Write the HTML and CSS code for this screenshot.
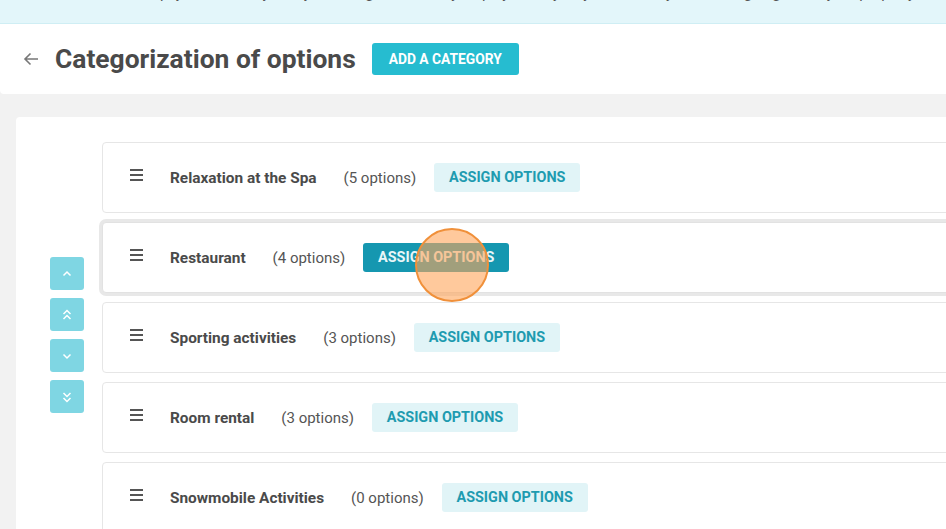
FILE: index.html
```html
<!DOCTYPE html>
<html lang="en">
<head>
  <meta charset="UTF-8" />
  <meta name="viewport" content="width=device-width, initial-scale=1.0"/>
  <title>Categorization of options</title>
  <link rel="stylesheet" href="styles.css">
</head>
<body>
  <!-- Bandeau d'info (coupé en haut) -->
  <div class="bandeau">
    <p class="bandeau-texte"><span class="bandeau-icone">❝</span> Tip: you can easily sort your categories so they display exactly as you wish on your booking engine for your property</p>
  </div>

  <!-- En-tête -->
  <div class="entete">
    <a class="retour" href="#">
      <svg width="16" height="16" viewBox="0 0 16 16"><path d="M15 8H2M7.5 2.5L2 8l5.5 5.5" fill="none" stroke="#777" stroke-width="1.6"/></svg>
    </a>
    <h1>Categorization of options</h1>
    <button class="btn-ajout">ADD A CATEGORY</button>
  </div>

  <div class="contenu">
    <div class="panneau">
      <div class="fleches">
        <button class="fleche"><svg width="12" height="12" viewBox="0 0 12 12"><path d="M2.5 7.5L6 4l3.5 3.5" fill="none" stroke="#fff" stroke-width="1.5"/></svg></button>
        <button class="fleche"><svg width="12" height="14" viewBox="0 0 12 14"><path d="M2.5 6L6 2.5 9.5 6M2.5 11L6 7.5l3.5 3.5" fill="none" stroke="#fff" stroke-width="1.5"/></svg></button>
        <button class="fleche"><svg width="12" height="12" viewBox="0 0 12 12"><path d="M2.5 4.5L6 8l3.5-3.5" fill="none" stroke="#fff" stroke-width="1.5"/></svg></button>
        <button class="fleche"><svg width="12" height="14" viewBox="0 0 12 14"><path d="M2.5 3L6 6.5 9.5 3M2.5 8L6 11.5 9.5 8" fill="none" stroke="#fff" stroke-width="1.5"/></svg></button>
      </div>

      <div class="liste">
        <div class="categorie">
          <span class="poignee"></span>
          <strong class="nom">Relaxation at the Spa</strong>
          <span class="nombre">(5 options)</span>
          <button class="btn-assigner">ASSIGN OPTIONS</button>
        </div>
        <div class="categorie active">
          <span class="poignee"></span>
          <strong class="nom">Restaurant</strong>
          <span class="nombre">(4 options)</span>
          <button class="btn-assigner">ASSIGN OPTIONS</button>
          <span class="clic"></span>
        </div>
        <div class="categorie">
          <span class="poignee"></span>
          <strong class="nom">Sporting activities</strong>
          <span class="nombre">(3 options)</span>
          <button class="btn-assigner">ASSIGN OPTIONS</button>
        </div>
        <div class="categorie">
          <span class="poignee"></span>
          <strong class="nom">Room rental</strong>
          <span class="nombre">(3 options)</span>
          <button class="btn-assigner">ASSIGN OPTIONS</button>
        </div>
        <div class="categorie">
          <span class="poignee"></span>
          <strong class="nom">Snowmobile Activities</strong>
          <span class="nombre">(0 options)</span>
          <button class="btn-assigner">ASSIGN OPTIONS</button>
        </div>
      </div>
    </div>
  </div>
</body>
</html>
```

FILE: styles.css
```css
html, body {
  margin: 0;
  height: 100%;
  overflow: hidden;
}
body {
  font-family: Roboto, "Liberation Sans", sans-serif;
  background: #f2f2f2;
  color: #4a4a4a;
}
button {
  font-family: inherit;
  border: none;
  cursor: pointer;
}

.bandeau {
  height: 23px;
  background: #e3f6fa;
  border-bottom: 1px solid #cfeef4;
  overflow: hidden;
}
.bandeau-texte {
  margin: -16px 0 0 130px;
  font-size: 15px;
  line-height: 18px;
  color: #555;
  white-space: nowrap;
}
.bandeau-icone {
  font-weight: bold;
  color: #333;
  margin-right: 6px;
}

.entete {
  height: 70px;
  background: #fff;
  display: flex;
  align-items: center;
  padding-left: 23px;
  border-bottom-left-radius: 4px;
}
.retour {
  display: flex;
  margin-right: 16px;
}
.entete h1 {
  margin: 0 16px 0 0;
  font-size: 26.4px;
  font-weight: bold;
  color: #4a4a4a;
}
.btn-ajout {
  height: 32px;
  padding: 0 17px;
  background: #26bcd0;
  color: #fff;
  font-size: 13.8px;
  font-weight: bold;
  border-radius: 3px;
}

.contenu {
  padding: 23px 0 0 16px;
}
.panneau {
  background: #fff;
  border-radius: 4px 0 0 0;
  padding: 25px 0 0 34px;
  display: flex;
  gap: 18px;
  height: 420px;
}
.fleches {
  display: flex;
  flex-direction: column;
  gap: 8px;
  margin-top: 115px;
}
.fleche {
  width: 34px;
  height: 33px;
  background: #7fd6e3;
  border-radius: 3px;
  display: flex;
  align-items: center;
  justify-content: center;
  padding: 0;
}

.liste {
  display: flex;
  flex-direction: column;
  gap: 9px;
  width: 1000px;
  flex-shrink: 0;
}
.categorie {
  position: relative;
  height: 71px;
  box-sizing: border-box;
  border: 1px solid #e6e6e6;
  border-radius: 4px;
  display: flex;
  align-items: center;
  padding-left: 27px;
  background: #fff;
}
.categorie.active {
  box-shadow: 0 0 0 3px #e8e8e8;
  border-color: #e2e2e2;
}
.poignee {
  width: 13px;
  height: 2px;
  background: #555;
  box-shadow: 0 -5px 0 #555, 0 5px 0 #555;
  margin: 0 27px 0 0;
  position: relative;
  top: -3px;
}
.nom {
  font-size: 15.4px;
  color: #4a4a4a;
  margin-right: 27px;
}
.nombre {
  font-size: 15px;
  color: #555;
  margin-right: 18px;
}
.btn-assigner {
  height: 29px;
  width: 146px;
  background: #e1f4f7;
  color: #1e9bb0;
  font-size: 14.4px;
  font-weight: bold;
  border-radius: 3px;
  padding: 0;
}
.active .btn-assigner {
  background: #1597b0;
  color: #e8f6f8;
}

/* cercle du clic */
.clic {
  position: absolute;
  left: 312px;
  top: 5px;
  width: 70px;
  height: 70px;
  border-radius: 50%;
  border: 2px solid #f0903a;
  background: rgba(255, 165, 90, 0.6);
}
```
